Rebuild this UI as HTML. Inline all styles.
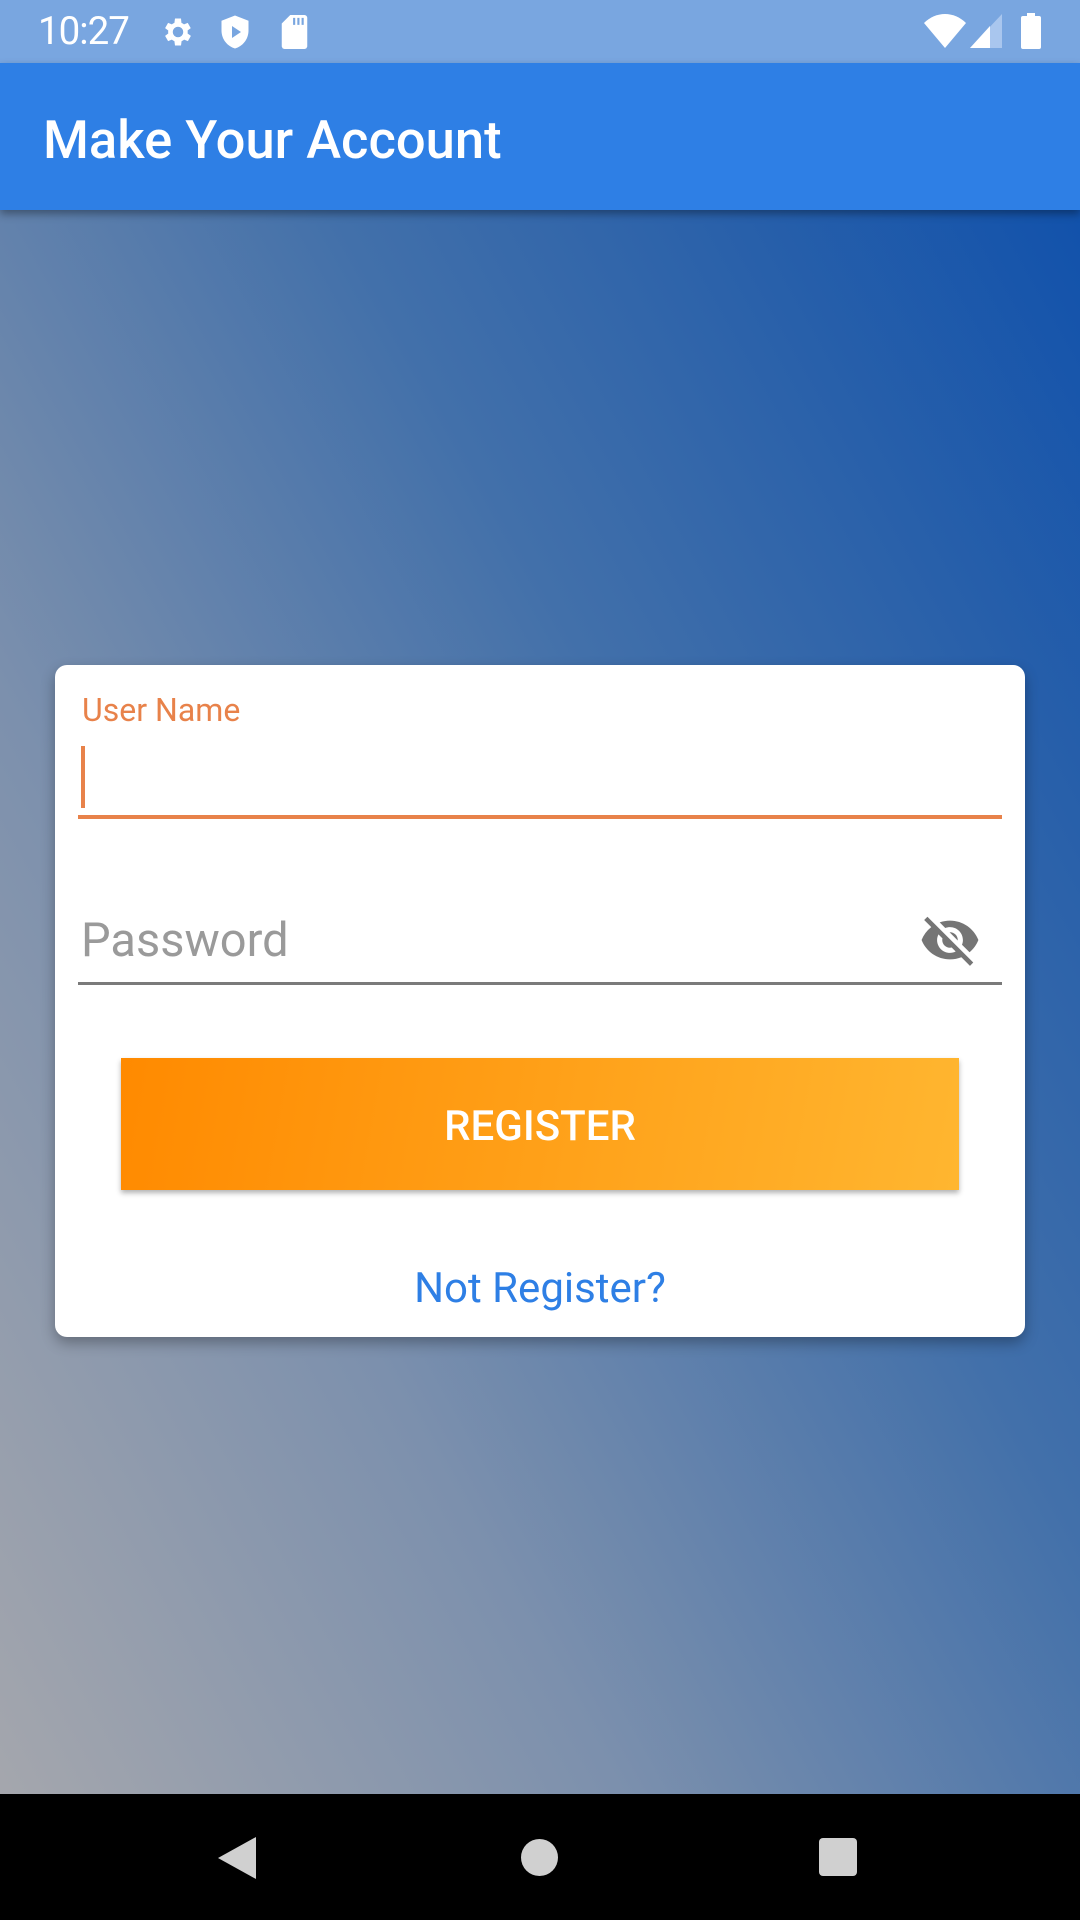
<!DOCTYPE html>
<html><head><meta charset="utf-8"><style>
*{margin:0;padding:0;box-sizing:border-box}
body{width:1080px;height:1920px;position:relative;overflow:hidden;font-family:"Roboto","Liberation Sans",sans-serif;background:linear-gradient(to top right,#a9a9ad 0%,#7c90ad 32%,#4270aa 60%,#0a4dab 100%)}
.status{position:absolute;left:0;top:0;width:1080px;height:63px;background:#79a6e0}
.time{position:absolute;left:38px;top:9px;color:#fff;font-size:38.5px;letter-spacing:-1px}
.appbar{position:absolute;left:0;top:63px;width:1080px;height:147px;background:#2e7fe5;box-shadow:0 4px 8px rgba(0,0,0,.35)}
.title{position:absolute;left:43px;top:46px;color:#fff;font-size:52.5px;font-weight:500}
.card{position:absolute;left:55px;top:665px;width:970px;height:672px;background:#fff;border-radius:12px;box-shadow:0 6px 14px rgba(0,0,0,.3)}
.lbl{position:absolute;left:27px;top:26px;color:#e8824a;font-size:32px}
.cursor{position:absolute;left:26px;top:81px;width:4px;height:62px;background:#e8824a}
.uline{position:absolute;left:23px;top:150px;width:924px;height:4px;background:#e8824a}
.pw{position:absolute;left:26px;top:248px;color:#9a9a9a;font-size:47px}
.pline{position:absolute;left:23px;top:317px;width:924px;height:3px;background:#7a7a7a}
.btn{position:absolute;left:66px;top:393px;width:838px;height:132px;background:linear-gradient(100deg,#ff8a00,#ffb630);box-shadow:0 3px 5px rgba(0,0,0,.3);color:#fff;font-size:42px;font-weight:500;text-align:center;line-height:138px}
.link{position:absolute;left:0;width:970px;top:599px;text-align:center;color:#2e7fe5;font-size:42px}
.nav{position:absolute;left:0;top:1794px;width:1080px;height:126px;background:#000}
</style></head><body>
<div class="status">
<div class="time">10:27</div>
<svg style="position:absolute;left:160px;top:14px" width="36" height="36" viewBox="0 0 24 24"><path fill="#fff" d="M19.4 13a7.5 7.5 0 000-2l2.1-1.6-2-3.5-2.5 1a7 7 0 00-1.7-1L15 3h-4l-.4 2.9a7 7 0 00-1.7 1l-2.5-1-2 3.5L6.5 11a7.5 7.5 0 000 2l-2.1 1.6 2 3.5 2.5-1a7 7 0 001.7 1L11 21h4l.4-2.9a7 7 0 001.7-1l2.5 1 2-3.5zM13 15.5A3.5 3.5 0 1113 8.5a3.5 3.5 0 010 7z" transform="translate(-1 0)"/></svg>
<svg style="position:absolute;left:220px;top:14px" width="30" height="36" viewBox="0 0 20 24"><path fill="#fff" d="M10 1L1 4.5v6.5c0 6 4 10.5 9 12 5-1.5 9-6 9-12V4.5z"/><path fill="#79a6e0" d="M8 8l6 4-6 4z"/></svg>
<svg style="position:absolute;left:281px;top:15px" width="27" height="34" viewBox="0 0 18 24"><path fill="#fff" d="M6 0h10a2 2 0 012 2v20a2 2 0 01-2 2H2a2 2 0 01-2-2V6z"/><path fill="#79a6e0" d="M8 2h1.5v5H8zM11 2h1.5v5H11zM14 2h1.5v5H14z"/></svg>
<svg style="position:absolute;left:924px;top:14px" width="42" height="34" viewBox="0 0 42 34"><path fill="#fff" d="M0 9C12-3 30-3 42 9L21 34z"/></svg>
<svg style="position:absolute;left:970px;top:14px" width="32" height="34" viewBox="0 0 32 34"><path fill="#a9c6ee" d="M32 0v34H0z"/><path fill="#fff" d="M20 12v22H0z"/></svg>
<svg style="position:absolute;left:1021px;top:13px" width="20" height="36" viewBox="0 0 20 36"><path fill="#fff" d="M6 0h8v3h4a2 2 0 012 2v29a2 2 0 01-2 2H2a2 2 0 01-2-2V5a2 2 0 012-2h4z"/></svg>
</div>
<div class="appbar"><div class="title">Make Your Account</div></div>
<div class="card">
<div class="lbl">User Name</div>
<div class="cursor"></div>
<div class="uline"></div>
<div class="pw">Password</div>
<svg style="position:absolute;left:860px;top:244px" width="70" height="62" viewBox="0 0 24 24"><path fill="#757575" d="M12 7c2.76 0 5 2.24 5 5 0 .65-.13 1.26-.36 1.83l2.92 2.92c1.510-1.26 2.7-2.89 3.43-4.75-1.73-4.39-6-7.5-11-7.5-1.4 0-2.740.25-3.98.7l2.16 2.16C10.74 7.13 11.35 7 12 7zM2 4.27l2.28 2.28.46.46A11.8 11.8 0 001 12c1.730 4.39 6 7.5 11 7.5 1.55 0 3.03-.3 4.38-.84l.42.42L19.73 22 21 20.73 3.27 3 2 4.27zM7.53 9.8l1.55 1.55c-.05.21-.08.43-.08.65 0 1.66 1.34 3 3 3 .22 0 .44-.03.65-.08l1.55 1.55c-.67.33-1.41.53-2.2.53-2.76 0-5-2.24-5-5 0-.79.2-1.53.53-2.2zm4.31-.78l3.15 3.15.02-.16c0-1.66-1.34-3-3-3l-.17.01z"/></svg>
<div class="pline"></div>
<div class="btn">REGISTER</div>
<div class="link">Not Register?</div>
</div>
<div class="nav">
<svg style="position:absolute;left:218px;top:43px" width="40" height="42" viewBox="0 0 40 42"><path fill="#d0d0d0" d="M38 0v42L0 21z"/></svg>
<div style="position:absolute;left:521px;top:45px;width:37px;height:37px;border-radius:50%;background:#d0d0d0"></div>
<div style="position:absolute;left:819px;top:44px;width:38px;height:38px;border-radius:4px;background:#d0d0d0"></div>
</div>
</body></html>
